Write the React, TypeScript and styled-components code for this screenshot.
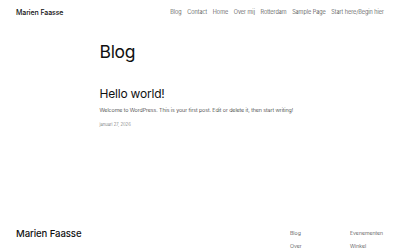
import React from "react";
import styled, { createGlobalStyle } from "styled-components";

const GlobalStyle = createGlobalStyle`
  html, body {
    margin: 0;
    padding: 0;
    background: #ffffff;
  }
  body {
    font-family: Inter, "Noto Sans", "Liberation Sans", sans-serif;
    color: #111111;
    -webkit-font-smoothing: antialiased;
  }
`;

const Page = styled.div`
  width: 400px;
  height: 250px;
  overflow: hidden;
  display: flex;
  flex-direction: column;
`;

const Header = styled.header`
  display: flex;
  align-items: center;
  justify-content: space-between;
  height: 24px;
  padding: 0 16px;
`;

const SiteTitle = styled.div<{ $size: number }>`
  font-size: ${(p) => p.$size}px;
  font-weight: 500;
  letter-spacing: -0.1px;
  color: #111111;
`;

const Nav = styled.nav`
  display: flex;
  gap: 5.6px;
  font-size: 5.5px;
  font-weight: 300;
  color: #333333;
`;

const NavLink = styled.span`
  white-space: nowrap;
`;

const Main = styled.main`
  width: 201px;
  margin: 0 auto;
  padding-top: 17px;
  flex: 1;
`;

const PageTitle = styled.h1`
  margin: 0;
  font-size: 17.5px;
  font-weight: 400;
  letter-spacing: -0.3px;
  line-height: 22px;
`;

const Post = styled.article`
  margin-top: 23px;
`;

const PostTitle = styled.h2`
  margin: 0;
  font-size: 12px;
  font-weight: 400;
  letter-spacing: -0.2px;
  line-height: 15px;
`;

const Excerpt = styled.p`
  margin: 5px 0 0;
  font-size: 5.4px;
  line-height: 8px;
  letter-spacing: -0.08px;
  font-weight: 300;
  color: #222222;
`;

const PostDate = styled.div`
  margin-top: 8px;
  font-size: 4.2px;
  font-weight: 300;
  color: #666666;
`;

const Footer = styled.footer`
  display: flex;
  justify-content: space-between;
  align-items: flex-start;
  padding: 0 0 0 16px;
  height: 30px;
`;

const FooterBrand = styled.div`
  padding-top: 8px;
`;

const FooterCols = styled.div`
  display: grid;
  grid-template-columns: 60px 50px;
  row-gap: 6px;
  font-size: 5.2px;
  font-weight: 300;
  line-height: 7px;
  color: #333333;
  padding-top: 10px;
`;

const navItems = [
  "Blog",
  "Contact",
  "Home",
  "Over mij",
  "Rotterdam",
  "Sample Page",
  "Start here/Begin hier",
];

const footerItems = ["Blog", "Evenementen", "Over", "Winkel"];

const App: React.FC = () => {
  return (
    <Page>
      <GlobalStyle />
      <Header>
        <SiteTitle $size={7}>Marien Faasse</SiteTitle>
        <Nav>
          {navItems.map((item) => (
            <NavLink key={item}>{item}</NavLink>
          ))}
        </Nav>
      </Header>
      <Main>
        <PageTitle>Blog</PageTitle>
        <Post>
          <PostTitle>Hello world!</PostTitle>
          <Excerpt>
            Welcome to WordPress. This is your first post. Edit or delete it,
            then start writing!
          </Excerpt>
          <PostDate>januari 27, 2026</PostDate>
        </Post>
      </Main>
      <Footer>
        <FooterBrand>
          <SiteTitle $size={9.6}>Marien Faasse</SiteTitle>
        </FooterBrand>
        <FooterCols>
          {footerItems.map((item) => (
            <span key={item}>{item}</span>
          ))}
        </FooterCols>
      </Footer>
    </Page>
  );
};

export default App;
